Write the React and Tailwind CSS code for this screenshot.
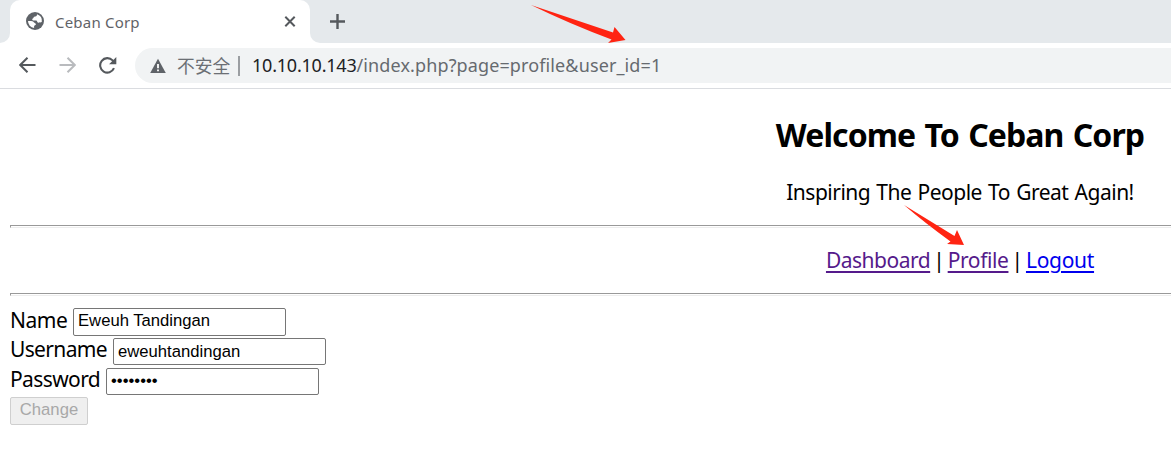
import React from "react";

function TabStrip() {
  return (
    <div className="flex h-[43px] bg-[#e5e9ec]">
      <div className="flex w-[10px] bg-white">
        <div className="w-full rounded-br-[10px] bg-[#e5e9ec]" />
      </div>
      <div className="flex w-[300px] items-center rounded-t-[10px] bg-white pl-4 pr-[13px]">
        <svg className="-mt-px size-[18px] shrink-0" viewBox="0 0 18 18">
          <circle cx="9" cy="9" r="9" fill="#5f6368" />
          <path d="M11 2.3C11.2 4.2 9.6 4.6 8.2 4.8C7.4 5 7.9 6.5 6.4 6.7C6 7.6 6.4 8.4 7.4 8.4H10.2C11.2 8.4 11 10 11.8 10.5C12.9 11 13.1 10.2 14.1 10.4L15.8 9.9A7 7 0 0 0 11 2.3Z" fill="#fff" />
          <path d="M2 9C4 9 6.6 8.6 7.8 10.2C8.5 11.3 10.1 11.1 9.9 12.4C9.6 13.3 8.2 13.2 8.1 14.3V16A7 7 0 0 1 2 9Z" fill="#fff" />
        </svg>
        <span className="ml-[11px] flex-1 whitespace-nowrap text-[15px] leading-5 tracking-[0.2px] text-[#5f6368]">Ceban Corp</span>
        <svg className="size-[14px]" viewBox="0 0 14 14" fill="none" stroke="#55595d" strokeWidth="2">
          <path d="M2.3 1.8l9.4 9.4M11.7 1.8l-9.4 9.4" />
        </svg>
      </div>
      <div className="flex flex-1 items-center bg-white">
        <div className="flex h-full flex-1 items-center rounded-bl-[10px] bg-[#e5e9ec] pl-5">
          <svg className="size-[15px]" viewBox="0 0 15 15" stroke="#55595d" strokeWidth="2.4">
            <path d="M7.5 0v15M0 7.5h15" />
          </svg>
        </div>
      </div>
    </div>
  );
}

function Toolbar() {
  return (
    <div className="flex h-[46px] items-center border-b border-[#dadce0] pl-[19px]">
      <svg className="size-[17px]" viewBox="0 0 17 17" fill="none" stroke="#55595d" strokeWidth="2">
        <path d="M16.5 8H1.5M8.5 .7L1.2 8l7.3 7.3" />
      </svg>
      <svg className="ml-[23px] size-[17px]" viewBox="0 0 17 17" fill="none" stroke="#b9bbbe" strokeWidth="2">
        <path d="M.5 8h15M8.5 .7L15.8 8l-7.3 7.3" />
      </svg>
      <svg className="ml-[23px] h-[17px] w-[18px]" viewBox="0 0 18 17" fill="none">
        <path d="M15 11.2A7.2 7.2 0 1 1 13.6 3.4L15.5 5.4" stroke="#55595d" strokeWidth="2.1" />
        <path d="M17.3 0v7.2h-7.2z" fill="#55595d" />
      </svg>
      <div className="ml-[18px] flex h-[35px] flex-1 items-center rounded-l-full bg-[#f1f3f4] pl-[15px]">
        <svg className="size-[16px]" viewBox="0 0 16 16">
          <path d="M8 .8L15.8 15H.2z" fill="#5f6368" />
          <path d="M7.1 6h1.8v4.3H7.1zM7.1 11.4h1.8v1.8H7.1z" fill="#fff" />
        </svg>
        <span className="-mt-[2px] ml-[11px] w-[55px] whitespace-nowrap font-['Noto_Sans_CJK_SC',sans-serif] text-[17.8px] leading-6 text-[#6b6f74]">不安全</span>
        <div className="ml-[6px] h-5 w-[2px] bg-[#9b9ea2]" />
        <span className="-mt-[2px] ml-[12px] whitespace-nowrap text-[18px] leading-6 text-[#666a6f]">
          <span className="tracking-[-0.22px] text-[#202124]">10.10.10.143</span>
          <span className="tracking-[0.12px]">/index.php?page=profile&amp;user_id=1</span>
        </span>
      </div>
    </div>
  );
}

function Rule() {
  return <div className="h-[3px] w-full border border-[#ededed] border-t-[#999] border-l-[#999]" />;
}

function Field({ label, type = "text", value, labelClass, inputClass }) {
  return (
    <label className="flex items-start">
      <span className={`shrink-0 whitespace-nowrap ${labelClass}`}>{label}</span>
      <input
        type={type}
        defaultValue={value}
        className={`w-[213px] rounded-[2px] border border-[#767676] bg-white px-1 font-['Liberation_Sans',Arial,sans-serif] text-[16.67px] leading-5 text-black ${inputClass}`}
      />
    </label>
  );
}

function Separator() {
  return <span className="w-[17.5px] text-center">|</span>;
}

function Arrow({ className, viewBox, d }) {
  return (
    <svg className={`pointer-events-none absolute ${className}`} viewBox={viewBox}>
      <path d={d} fill="#ff2412" />
    </svg>
  );
}

export default function App() {
  return (
    <div className="relative h-[460px] w-full overflow-hidden bg-white font-['Noto_Sans','Noto_Sans_CJK_SC',sans-serif]">
      <TabStrip />
      <Toolbar />
      <main className="ml-[10px] w-[1900px] text-[21px] text-black">
        <header className="flex flex-col items-center">
          <h1 className="mt-[25px] whitespace-nowrap text-[32px] font-bold leading-[42px] tracking-[-0.9px] [word-spacing:1.8px]">Welcome To Ceban Corp</h1>
          <p className="mt-[22px] whitespace-nowrap leading-[28px] tracking-[-0.5px] [word-spacing:1.2px]">Inspiring The People To Great Again!</p>
        </header>
        <div className="mt-[19px]"><Rule /></div>
        <nav className="mt-[18px] flex h-[28px] justify-center leading-[28px]">
          <a href="#dashboard" className="tracking-[-0.5px] text-[#551a8b] underline decoration-2 underline-offset-[3px]">Dashboard</a>
          <Separator />
          <a href="#profile" className="tracking-[-0.4px] text-[#551a8b] underline decoration-2 underline-offset-[3px]">Profile</a>
          <Separator />
          <a href="#logout" className="tracking-[-0.3px] text-[#0000ee] underline decoration-2 underline-offset-[3px]">Logout</a>
        </nav>
        <div className="mt-[19px]"><Rule /></div>
        <form className="mt-[12px] flex flex-col items-start">
          <Field label="Name" value="Eweuh Tandingan" labelClass="h-[30px] w-[63px] leading-[24px] tracking-[-0.5px]" inputClass="h-[28px] pb-[2px]" />
          <Field label="Username" value="eweuhtandingan" labelClass="h-[30px] w-[103px] leading-[23px] tracking-[-0.65px]" inputClass="h-[27px]" />
          <Field label="Password" type="password" value="password" labelClass="h-[29px] w-[96px] leading-[22px] tracking-[-0.6px]" inputClass="h-[27px] pb-[2px]" />
          <button type="button" disabled className="h-[28px] w-[78px] rounded-[2px] border border-[#cfcfcf] bg-[#efefef] pb-[2px] font-['Liberation_Sans',Arial,sans-serif] text-[16.67px] leading-5 text-[#a8a8a8]">Change</button>
        </form>
      </main>
      <Arrow className="left-[530px] top-[4px] h-[40px] w-[97px]" viewBox="530 4 97 40" d="M531 5L613 32.5L614.5 27L625.5 40L608 43L611.5 39.5Q570 24 531 5Z" />
      <Arrow className="left-[903px] top-[204px] h-[43px] w-[63px]" viewBox="903 204 63 43" d="M904 205L954.5 236L957 230L964 245L947 244L950.5 241.5Q925 223 904 205Z" />
    </div>
  );
}
